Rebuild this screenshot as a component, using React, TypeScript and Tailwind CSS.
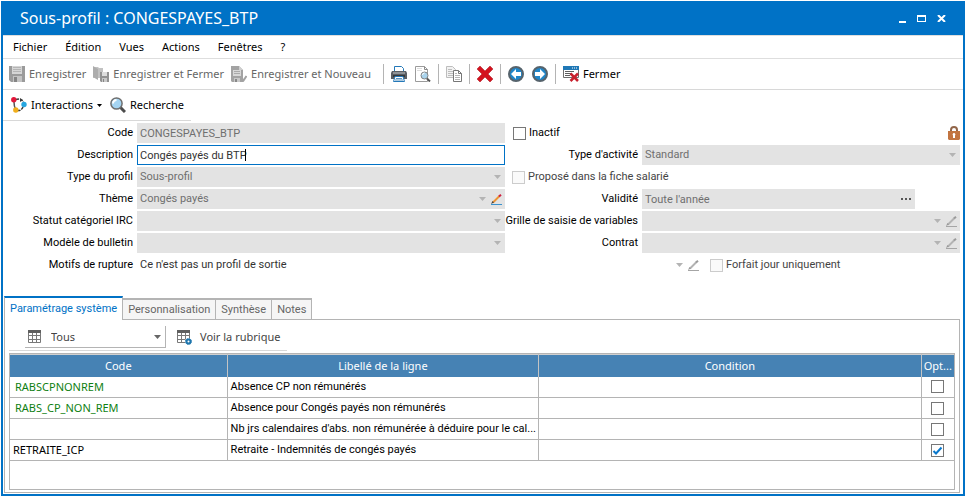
import { useState } from 'react';
import type { ReactNode } from 'react';

const MENUS = ['Fichier', 'Édition', 'Vues', 'Actions', 'Fenêtres', '?'];
const TABS = ['Paramétrage système', 'Personnalisation', 'Synthèse', 'Notes'];

const ROWS = [
    { code: 'RABSCPNONREM', label: 'Absence CP non rémunérés', linked: true, optional: false },
    { code: 'RABS_CP_NON_REM', label: 'Absence pour Congés payés non rémunérés', linked: true, optional: false },
    { code: '', label: "Nb jrs calendaires d'abs. non rémunérée à déduire pour le cal...", linked: false, optional: false },
    { code: 'RETRAITE_ICP', label: 'Retraite - Indemnités de congés payés', linked: false, optional: true },
];

const Icon = ({ children }: { children: ReactNode }) => (
    <svg viewBox="0 0 16 16" width="16" height="16" fill="none" className="shrink-0" aria-hidden="true">
        {children}
    </svg>
);

const SaveIcon = () => (
    <Icon>
        <path d="M0 0h16v16H2l-2-2z" fill="#9b9b9b" />
        <path d="M3 0h10v8H3z" fill="#d6d6d6" />
        <path d="M4 1.500h8M4 3.500h8M4 5.500h8" stroke="#b5b5b5" />
        <path d="M4 10h9v6H4z" fill="#c4c4c4" />
        <path d="M5 11h3v5H5z" fill="#858585" />
    </Icon>
);

const SaveCloseIcon = () => (
    <Icon>
        <path d="M0 1h5l1 1h4v10H0z" fill="#c2c2c2" />
        <path d="M0 0l5 3v11l-5-3z" fill="#adadad" />
        <path d="M7 6h9v10H8l-1-1z" fill="#939393" />
        <path d="M9 6h5v4H9z" fill="#dedede" />
        <path d="M9 12h5v4H9z" fill="#c9c9c9" />
        <path d="M10 13h1v3h-1z" fill="#858585" />
    </Icon>
);

const SaveNewIcon = () => (
    <Icon>
        <path d="M1 0h7l4 4v12H1l-1-1V0z" fill="#a3a3a3" />
        <path d="M8 0v4h4z" fill="#cfcfcf" />
        <path d="M2 4h8v6H2z" fill="#d8d8d8" />
        <path d="M3 5.500h6M3 7.500h6" stroke="#aaa" />
        <path d="M3 12h6v4H3z" fill="#c9c9c9" />
        <path d="M4 13h2v3H4z" fill="#888" />
        <path d="M10.500 12l2 2.500 3-4.500" stroke="#a2a2a2" strokeWidth="2" />
    </Icon>
);

const PrintIcon = () => (
    <Icon>
        <path d="M3.500 5V.5h7l2 2V5" stroke="#2478b8" fill="#fff" />
        <path d="M1 5h14l1 2v6H0V7z" fill="#5a5e63" />
        <path d="M2 6.500h12v1H2z" fill="#c3c6ca" />
        <path d="M2 9h12v2H2z" fill="#34383c" />
        <path d="M4 10.500h8l1.500 5h-11z" fill="#fff" stroke="#2478b8" />
        <path d="M5 12.500h6M4 14h8" stroke="#5b94c0" />
    </Icon>
);

const PreviewIcon = () => (
    <Icon>
        <path d="M.5 .5h9l3 3v12H.5z" fill="#fff" stroke="#9b9b9b" />
        <path d="M9.500 .5v3h3" stroke="#8b8b8b" />
        <path d="M2 2.500h5M2 4.500h5" stroke="#dcdcdc" />
        <path d="M11.500 12l3.500 3.500" stroke="#565656" strokeWidth="2" />
        <circle cx="9.500" cy="9.500" r="3.500" fill="#a9d3ec" stroke="#848484" />
        <path d="M7.500 9a2 2 0 0 1 2-2" stroke="#fff" />
    </Icon>
);

const CopyIcon = () => (
    <Icon>
        <path d="M.5 .5h6l3 3v8h-9z" fill="#f2f2f2" stroke="#bdbdbd" />
        <path d="M2 3.500h4M2 5.500h5M2 7.500h5M2 9.500h5" stroke="#bdbdbd" />
        <path d="M7.500 4.500h5l3 3v8h-8z" fill="#fff" stroke="#777" />
        <path d="M12.500 4.500v3h3" stroke="#777" />
        <path d="M9 7.500h2M9 9.500h5M9 11.500h5M9 13.500h5" stroke="#b5b5b5" />
    </Icon>
);

const DeleteIcon = () => (
    <Icon>
        <path d="M3 0l5 5 5-5 3 3-5 5 5 5-3 3-5-5-5 5-3-3 5-5-5-5z" fill="#d3131f" stroke="#a80f19" strokeWidth=".5" />
    </Icon>
);

const ArrowIcon = ({ back }: { back?: boolean }) => (
    <Icon>
        <circle cx="8" cy="8" r="7" fill="#1f86c9" stroke="#56636c" strokeWidth="2" />
        <path
            d={back ? 'M3 8l5-5v3h5v4H8v3z' : 'M13 8l-5-5v3H3v4h5v3z'}
            fill="#fff"
        />
    </Icon>
);

const CloseFormIcon = () => (
    <Icon>
        <path d="M.5 .5h15v11H.5z" fill="#fff" stroke="#6e6e6e" />
        <path d="M0 0h16v4H0z" fill="#1f78b6" />
        <path d="M9 2h1M11 2h1M13 2h1" stroke="#fff" />
        <path d="M2 5.500h9M2 7.500h7M2 9.500h5" stroke="#5f5f5f" />
        <path d="M7.500 7.500l7.500 7.500M15 7.500L7.500 15" stroke="#c8202c" strokeWidth="2.500" />
    </Icon>
);

const InteractionsIcon = () => (
    <Icon>
        <path d="M5 2.500c3-1 6 0 7.500 2.500" stroke="#3c3c3c" strokeWidth="1.500" strokeDasharray="3 1" />
        <path d="M12 10c-1 2.500-3 4-6 3.500" stroke="#3c3c3c" strokeWidth="1.500" strokeDasharray="3 1" />
        <path d="M3 5c0 3 .5 5 1.500 7" stroke="#555" strokeWidth="1.500" />
        <path d="M9 1l3 2-3 2" fill="#3c3c3c" />
        <circle cx="2.800" cy="2.800" r="2.700" fill="#e2173a" />
        <circle cx="13" cy="7.500" r="2.700" fill="#25a6e0" />
        <circle cx="4.800" cy="13" r="2.700" fill="#f0ae1c" />
    </Icon>
);

const SearchIcon = () => (
    <Icon>
        <path d="M10 10l5 5" stroke="#4c4c4c" strokeWidth="3" />
        <circle cx="6.500" cy="6.500" r="5.600" fill="#a4d4f2" stroke="#6f6f6f" strokeWidth="1.500" />
        <path d="M3 6.500a3.500 3.500 0 0 1 3.500-3.500" stroke="#fff" strokeWidth="2" />
    </Icon>
);

const LockIcon = () => (
    <svg viewBox="0 0 12 14" width="12" height="14" fill="none" role="img" aria-label="Verrouillé">
        <path d="M3 6V4a3 3 0 0 1 6 0v2" stroke="#92664a" strokeWidth="2" />
        <path d="M0 5h12v8l-1 1H1l-1-1z" fill="#c27440" />
        <path d="M6 7a1.500 1.500 0 0 1 1 2.500V12H5V9.500A1.500 1.500 0 0 1 6 7z" fill="#fff" />
    </svg>
);

const GridIcon = ({ gear }: { gear?: boolean }) => (
    <Icon>
        <path d="M1.500 2.500h12v11h-12zM1.500 6.500h12M1.500 10.500h12M5.500 3v10M9.500 3v10" stroke="#787878" />
        <path d="M1 1h13v3H1z" fill="#5f5f5f" />
        {gear && (
            <>
                <circle cx="12.500" cy="12.500" r="3.500" fill="#fff" />
                <circle cx="12.500" cy="12.500" r="2" stroke="#1f76ad" strokeWidth="2" />
                <circle cx="12.500" cy="12.500" r="3" stroke="#1f76ad" strokeDasharray="1.200 1.150" />
            </>
        )}
    </Icon>
);

const Chevron = ({ color = '#b4b4b4' }: { color?: string }) => (
    <svg viewBox="0 0 7 4" width="7" height="4" className="shrink-0" aria-hidden="true">
        <path d="M0 0h7L3.500 4z" fill={color} />
    </svg>
);

const Pencil = ({ active }: { active?: boolean }) => (
    <svg viewBox="0 0 11 11" width="11" height="11" fill="none" className="shrink-0" aria-hidden="true">
        <path d="M2 8.500L8.500 2" stroke={active ? '#ec9434' : '#b3b3b3'} strokeWidth="2" />
        <path d="M8 2.500L10 .8" stroke={active ? '#d0203f' : '#9b9b9b'} strokeWidth="2" />
        <path d="M0 10l1.500-3L3 8.500z" fill={active ? '#444' : '#999'} />
        <path d="M0 10.500h11" stroke={active ? '#3b92cd' : '#a5a5a5'} />
    </svg>
);

const Separator = () => <span className="mx-[7px] h-5 w-px bg-[#b4b4b4]" />;

interface ToolButtonProps {
    icon: ReactNode;
    label: string;
    iconOnly?: boolean;
    disabled?: boolean;
    menu?: boolean;
}

const ToolButton = ({ icon, label, iconOnly, disabled, menu }: ToolButtonProps) => (
    <button
        type="button"
        disabled={disabled}
        aria-label={label}
        className="flex items-center gap-1 whitespace-nowrap text-black disabled:text-[#666]"
    >
        {icon}
        {!iconOnly && <span>{label}</span>}
        {menu && (
            <svg viewBox="0 0 5 3" width="5" height="3" aria-hidden="true">
                <path d="M0 0h5L2.500 3z" fill="#000" />
            </svg>
        )}
    </button>
);

const FieldLabel = ({ id, children }: { id: string; children: ReactNode }) => (
    <label htmlFor={id} className="flex justify-end whitespace-nowrap">
        {children}
    </label>
);

interface SelectFieldProps {
    id: string;
    value?: string;
    pencil?: 'active' | 'muted';
    plain?: boolean;
}

const SelectField = ({ id, value = '', pencil, plain }: SelectFieldProps) => (
    <div className={`flex h-5 min-w-0 flex-1 items-center gap-[5px] ${pencil ? 'pr-[3px]' : 'pr-1'} ${plain ? '' : 'bg-[#e3e3e3]'}`}>
        <select
            id={id}
            disabled
            className={`h-5 min-w-0 flex-1 appearance-none bg-transparent pl-[3px] opacity-100 ${plain ? 'text-[#333]' : 'text-[#6f6f6f]'}`}
        >
            <option>{value}</option>
        </select>
        <Chevron />
        {pencil && <Pencil active={pencil === 'active'} />}
    </div>
);

interface CheckProps {
    id: string;
    label: string;
    hideLabel?: boolean;
    disabled?: boolean;
    defaultChecked?: boolean;
}

const Check = ({ id, label, hideLabel, disabled, defaultChecked }: CheckProps) => (
    <span className="relative inline-flex items-center gap-[3px] whitespace-nowrap">
        <input
            id={id}
            type="checkbox"
            disabled={disabled}
            defaultChecked={defaultChecked}
            aria-label={hideLabel ? label : undefined}
            className="peer size-[13px] shrink-0 appearance-none border border-[#777] bg-white disabled:border-[#ccc] disabled:bg-[#fafafa]"
        />
        <svg
            viewBox="0 0 13 13"
            width="13"
            height="13"
            fill="none"
            className="pointer-events-none absolute left-0 hidden peer-checked:block"
            aria-hidden="true"
        >
            <path d="M2.500 7l2.500 2.500L10.500 3.500" stroke="#0a78cc" strokeWidth="2" />
        </svg>
        {!hideLabel && (
            <label htmlFor={id} className={disabled ? 'text-[#444]' : ''}>
                {label}
            </label>
        )}
    </span>
);

const TitleBar = () => (
    <header className="flex h-[34px] items-center justify-between bg-[#0072c6] px-[17px] text-white">
        <h1 className="text-[16px] leading-5">Sous-profil : CONGESPAYES_BTP</h1>
        <div className="flex items-center gap-[11px]">
            <button type="button" aria-label="Réduire">
                <svg viewBox="0 0 7 9" width="7" height="9">
                    <path d="M0 7h7v2H0z" fill="#fff" />
                </svg>
            </button>
            <button type="button" aria-label="Agrandir">
                <svg viewBox="0 0 9 7" width="9" height="7">
                    <path d="M0 0h9v7H0zM1 2v4h7V2z" fill="#fff" fillRule="evenodd" />
                </svg>
            </button>
            <button type="button" aria-label="Fermer la fenêtre">
                <svg viewBox="0 0 9 7" width="9" height="7">
                    <path d="M1 0l7 7M8 0L1 7" stroke="#fff" strokeWidth="2" />
                </svg>
            </button>
        </div>
    </header>
);

const ProfileForm = () => (
    <form className="mt-[2px] flex flex-col gap-[2px] pr-[3px] font-[Roboto,sans-serif]">
        <div className="grid grid-cols-[130px_minmax(0,368fr)_129px_minmax(0,318fr)] items-center gap-x-1 gap-y-[2px]">
            <FieldLabel id="code">Code</FieldLabel>
            <input id="code" disabled defaultValue="CONGESPAYES_BTP" className="h-5 min-w-0 bg-[#e3e3e3] pl-[3px] text-[#6f6f6f]" />
            <div className="flex pl-1">
                <Check id="inactif" label="Inactif" />
            </div>
            <div className="flex justify-end">
                <LockIcon />
            </div>

            <FieldLabel id="description">Description</FieldLabel>
            <div className="relative flex h-5">
                <input
                    id="description"
                    defaultValue="Congés payés du BTP"
                    className="h-5 w-full min-w-0 border border-[#0072c6] bg-white pl-[2px] text-[#333] outline-none"
                />
                <span className="absolute top-1 left-[108px] h-3 w-px bg-black" />
            </div>
            <FieldLabel id="activite">Type d'activité</FieldLabel>
            <SelectField id="activite" value="Standard" />

            <FieldLabel id="type">Type du profil</FieldLabel>
            <SelectField id="type" value="Sous-profil" />
            <div className="col-span-2 flex pl-[3px]">
                <Check id="propose" label="Proposé dans la fiche salarié" disabled />
            </div>

            <FieldLabel id="theme">Thème</FieldLabel>
            <SelectField id="theme" value="Congés payés" pencil="active" />
            <FieldLabel id="validite">Validité</FieldLabel>
            <div className="mr-[45px] flex h-5 items-center bg-[#e3e3e3] pr-1">
                <input id="validite" disabled defaultValue="Toute l'année" className="h-5 min-w-0 flex-1 pl-[3px] text-[#6f6f6f]" />
                <button type="button" aria-label="Choisir la validité">
                    <svg viewBox="0 0 10 2" width="10" height="2">
                        <path d="M0 0h2v2H0zM4 0h2v2H4zM8 0h2v2H8z" fill="#555" />
                    </svg>
                </button>
            </div>

            <FieldLabel id="statut">Statut catégoriel IRC</FieldLabel>
            <SelectField id="statut" />
            <FieldLabel id="grille">Grille de saisie de variables</FieldLabel>
            <SelectField id="grille" pencil="muted" />

            <FieldLabel id="modele">Modèle de bulletin</FieldLabel>
            <SelectField id="modele" />
            <FieldLabel id="contrat">Contrat</FieldLabel>
            <SelectField id="contrat" pencil="muted" />
        </div>
        <div className="grid grid-cols-[130px_minmax(0,1fr)_254px] items-center gap-x-1">
            <FieldLabel id="motifs">Motifs de rupture</FieldLabel>
            <SelectField id="motifs" value="Ce n'est pas un profil de sortie" pencil="muted" plain />
            <div className="flex pl-1">
                <Check id="forfait" label="Forfait jour uniquement" disabled />
            </div>
        </div>
    </form>
);

const LinesTable = () => (
    <div className="mx-1 mb-[2px] flex-1 border border-[#b4b4b4]">
        <table className="w-full table-fixed border-collapse">
            <colgroup>
                <col className="w-[23%]" />
                <col className="w-[33%]" />
                <col />
                <col className="w-[33px]" />
            </colgroup>
            <thead>
                <tr className="h-[22px] border-t border-[#d0d0d0] bg-[#4682b4] text-white">
                    <th className="border-r border-[#c4c4c4] font-normal">Code</th>
                    <th className="border-r border-[#c4c4c4] font-normal">Libellé de la ligne</th>
                    <th className="border-r border-[#c4c4c4] font-normal">Condition</th>
                    <th className="font-normal whitespace-nowrap">Opt...</th>
                </tr>
            </thead>
            <tbody>
                {ROWS.map((row, i) => (
                    <tr key={i} className="h-[21px] border-b border-[#b4b4b4]">
                        <td className={`border-r border-[#b4b4b4] ${row.linked ? 'pl-[5px] text-[#0f7f12]' : 'pl-[3px]'}`}>
                            {row.code}
                        </td>
                        <td className="border-r border-[#b4b4b4] pl-[3px] font-[Roboto,sans-serif] whitespace-nowrap">
                            {row.label}
                        </td>
                        <td className="border-r border-[#b4b4b4]" />
                        <td>
                            <div className="flex justify-center">
                                <Check id={`option-${i}`} label={`Option ${row.label}`} hideLabel defaultChecked={row.optional} />
                            </div>
                        </td>
                    </tr>
                ))}
            </tbody>
        </table>
    </div>
);

export default function App() {
    const [tab, setTab] = useState(TABS[0]);

    return (
        <div className="h-screen bg-white p-px font-['Noto_Sans',sans-serif] text-[11px] leading-4 text-black">
            <main className="flex h-full flex-col border-2 border-t-0 border-[#0072c6]">
                <TitleBar />

                <div>
                    <nav className="flex h-6 items-center gap-[18px] border-t border-b border-[#dedede] pl-[10px]">
                        {MENUS.map((menu) => (
                            <button key={menu} type="button">{menu}</button>
                        ))}
                    </nav>
                    <div className="flex h-[31px] items-center border-b border-[#d8d8d8] pl-[6px]">
                        <div className="flex gap-[7px]">
                            <ToolButton icon={<SaveIcon />} label="Enregistrer" disabled />
                            <ToolButton icon={<SaveCloseIcon />} label="Enregistrer et Fermer" disabled />
                            <ToolButton icon={<SaveNewIcon />} label="Enregistrer et Nouveau" disabled />
                        </div>
                        <span className="w-[5px]" />
                        <Separator />
                        <div className="flex gap-2">
                            <ToolButton icon={<PrintIcon />} label="Imprimer" iconOnly />
                            <ToolButton icon={<PreviewIcon />} label="Aperçu" iconOnly />
                        </div>
                        <Separator />
                        <ToolButton icon={<CopyIcon />} label="Copier" iconOnly />
                        <Separator />
                        <ToolButton icon={<DeleteIcon />} label="Supprimer" iconOnly />
                        <Separator />
                        <div className="flex gap-2">
                            <ToolButton icon={<ArrowIcon back />} label="Précédent" iconOnly />
                            <ToolButton icon={<ArrowIcon />} label="Suivant" iconOnly />
                        </div>
                        <Separator />
                        <ToolButton icon={<CloseFormIcon />} label="Fermer" />
                    </div>
                    <div className="flex h-[31px] w-[188px] items-center gap-2 border-b border-[#d8d8d8] pl-2">
                        <ToolButton icon={<InteractionsIcon />} label="Interactions" menu />
                        <ToolButton icon={<SearchIcon />} label="Recherche" />
                    </div>
                </div>

                <ProfileForm />

                <div role="tablist" className="mt-[21px] ml-px flex h-[23px] items-end font-[Roboto,sans-serif]">
                    {TABS.map((name) => (
                        <button
                            key={name}
                            type="button"
                            role="tab"
                            aria-selected={tab === name}
                            onClick={() => setTab(name)}
                            className={
                                tab === name
                                    ? 'z-10 -mb-px h-6 border-t-2 border-r border-l border-t-[#0072c6] border-r-[#b4b4b4] border-l-[#b4b4b4] bg-white px-[5px] text-[#0072c6]'
                                    : 'h-[21px] border-t-2 border-r border-[#b4b4b4] bg-[#f5f5f5] px-[5px] text-[#666]'
                            }
                        >
                            {name}
                        </button>
                    ))}
                </div>
                <section className="mr-[3px] mb-px ml-px flex flex-1 flex-col border border-[#b4b4b4]">
                    <div className="mt-1 ml-1 flex h-[27px] w-[278px] items-center border-b border-[#d8d8d8] pl-4 text-[#444]">
                        <div className="flex h-[22px] w-[141px] items-center gap-2 border-r border-b border-[#b4b4b4] pr-1 pl-[2px]">
                            <GridIcon />
                            <select aria-label="Filtre des lignes" className="min-w-0 flex-1 appearance-none">
                                <option>Tous</option>
                            </select>
                            <Chevron color="#666" />
                        </div>
                        <button type="button" className="ml-[10px] flex items-center gap-2 whitespace-nowrap">
                            <GridIcon gear />
                            Voir la rubrique
                        </button>
                    </div>
                    <div className="h-[2px]" />
                    <LinesTable />
                </section>
            </main>
        </div>
    );
}
